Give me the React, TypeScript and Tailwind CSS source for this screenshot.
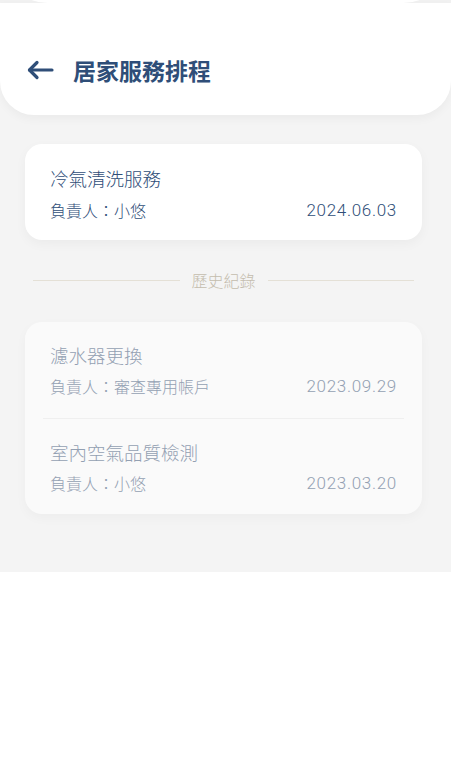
const records = [
  { title: "濾水器更換", owner: "審查專用帳戶", date: "2023.09.29" },
  { title: "室內空氣品質檢測", owner: "小悠", date: "2023.03.20" },
];

function BackArrow() {
  return (
    <svg width="27" height="20" viewBox="0 0 27 20" fill="none" stroke="#2f4e78" strokeWidth="3.2" strokeLinecap="round" strokeLinejoin="round">
      <path d="M25 10H2.5" />
      <path d="M10 2.5L2.5 10l7.5 7.5" />
    </svg>
  );
}

export default function App() {
  return (
    <div className="min-h-[781px] bg-white font-['Noto_Sans_CJK_TC','Noto_Sans',sans-serif]">
      <div className="bg-[#f4f4f4] pb-[58px]">
        <div className="flex h-[3px] items-end overflow-hidden bg-[#f1f1f1]">
          <div className="h-[50px] w-full shrink-0 rounded-b-[48px] bg-white" />
        </div>
        <header className="flex h-[112px] items-center gap-[19px] rounded-b-[34px] bg-white pl-[27px] pr-[27px] pt-[22px] shadow-[0_4px_10px_rgba(0,0,0,0.04)]">
          <BackArrow />
          <h1 className="text-[23px] font-bold leading-none text-[#2f4e78]">居家服務排程</h1>
        </header>

        <div className="pl-[25px] pr-[29px] pt-[29px]">
          <div className="rounded-[17px] bg-white px-[25px] pb-[19px] pt-[22px] shadow-[0_4px_12px_rgba(0,0,0,0.04)]">
            <p className="text-[18.5px] font-light leading-[24px] text-[#2f4e78]">冷氣清洗服務</p>
            <div className="mt-[9px] flex items-center justify-between text-[16px] font-light leading-[22px] text-[#2f4e78]">
              <span>負責人：小悠</span>
              <span className="font-['Roboto',sans-serif] text-[17px] tracking-[0.7px]">2024.06.03</span>
            </div>
          </div>

          <div className="mt-[29px] flex items-center gap-[12px] px-[8px]">
            <div className="h-px flex-1 bg-[#e4e0d6]" />
            <span className="text-[16px] font-light leading-[22px] text-[#c4bdae]">歷史紀錄</span>
            <div className="h-px flex-1 bg-[#e4e0d6]" />
          </div>

          <div className="mt-[31px] rounded-[17px] bg-[#fafafa] px-[18px] shadow-[0_4px_12px_rgba(0,0,0,0.03)]">
            {records.map((r, i) => (
              <div key={r.title} className={i > 0 ? "border-t border-[#efefef]" : ""}>
                <div className={`px-[7px] pt-[21px] ${i > 0 ? "pb-[20px]" : "pb-[21px]"}`}>
                  <p className="text-[18.5px] font-light leading-[24px] text-[#93a0b2]">{r.title}</p>
                  <div className="mt-[8px] flex items-center justify-between text-[16px] font-light leading-[22px] text-[#93a0b2]">
                    <span>負責人：{r.owner}</span>
                    <span className="font-['Roboto',sans-serif] text-[17px] tracking-[0.7px]">{r.date}</span>
                  </div>
                </div>
              </div>
            ))}
          </div>
        </div>
      </div>
    </div>
  );
}
